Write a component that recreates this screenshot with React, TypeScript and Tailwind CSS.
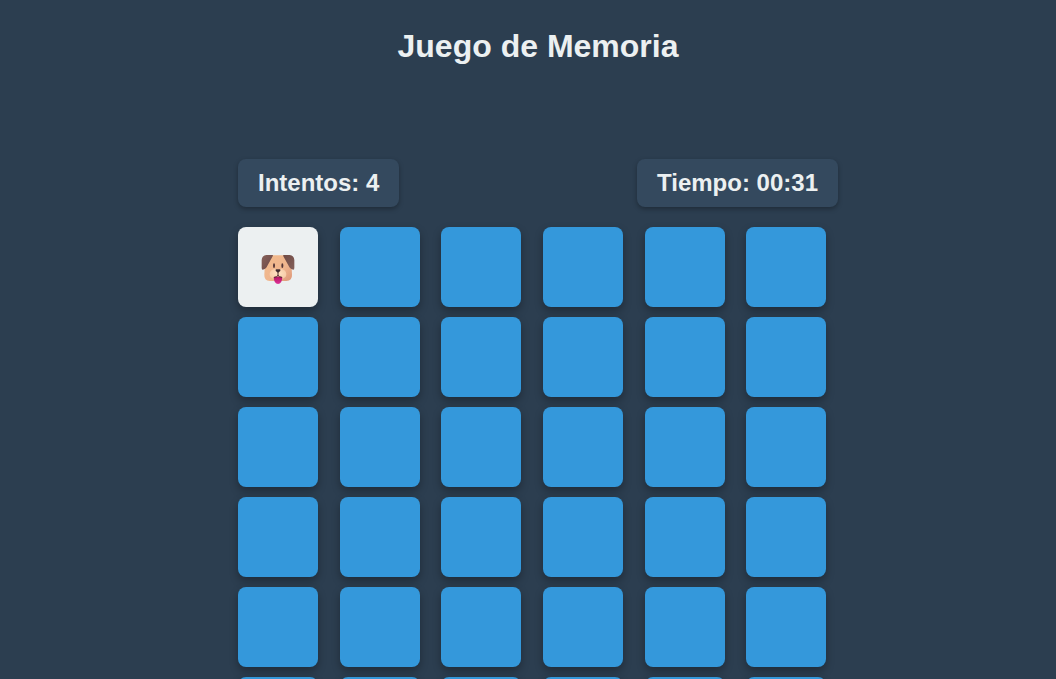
import { useState } from "react";

const TOTAL_CARDS = 36;

function DogFace() {
  return (
    <svg width="50" height="44" viewBox="0 -3 150 132" role="img" aria-label="Perro">
      <defs>
        <linearGradient id="fur" x1="0" y1="0" x2="1" y2="1">
          <stop offset="0" stopColor="#f2bb8c" />
          <stop offset="0.6" stopColor="#efb58e" />
          <stop offset="1" stopColor="#dc9678" />
        </linearGradient>
        <linearGradient id="earLeft" x1="0" y1="0" x2="1" y2="1">
          <stop offset="0" stopColor="#87625a" />
          <stop offset="1" stopColor="#6a4646" />
        </linearGradient>
        <linearGradient id="earRight" x1="0" y1="0" x2="1" y2="1">
          <stop offset="0" stopColor="#6f4a44" />
          <stop offset="1" stopColor="#84605a" />
        </linearGradient>
        <radialGradient id="muzzle" cx="0.5" cy="0.45" r="0.6">
          <stop offset="0" stopColor="#ffe3c4" />
          <stop offset="1" stopColor="#f6c8a4" />
        </radialGradient>
        <linearGradient id="tongue" x1="0" y1="0" x2="0" y2="1">
          <stop offset="0" stopColor="#b3125f" />
          <stop offset="1" stopColor="#e0359a" />
        </linearGradient>
      </defs>
      <path
        d="M46 28H104Q115 29 115 45L117 86Q118 104 100 105H50Q33 104 34 86L36 45Q37 29 46 28Z"
        fill="url(#fur)"
      />
      <path d="M40 27H59Q61 28 59 31L44 58Q38 71 29 71Q26 71 26 65V42Q27 28 40 27Z" fill="url(#earLeft)" />
      <path d="M110 27H92Q89 28 91 31L106 58Q112 71 121 71Q124 71 124 65V42Q123 28 110 27Z" fill="url(#earRight)" />
      <path
        d="M75 70C60 66 50 74 50 85C50 97 64 102 75 96C86 102 100 97 100 85C100 74 90 66 75 70Z"
        fill="url(#muzzle)"
      />
      <ellipse cx="63" cy="59" rx="3" ry="7" fill="#533536" />
      <ellipse cx="88" cy="59" rx="3" ry="7" fill="#533536" />
      <path d="M62 94Q75 89 88 94Q87 114 75 114Q63 114 62 94Z" fill="url(#tongue)" />
      <path d="M75 79V88M64 94Q71 94 75 88Q79 94 86 94" fill="none" stroke="#50302f" strokeWidth="3" strokeLinecap="round" />
      <path d="M69 70H81Q84 72 81 76Q78 79 75 80Q72 79 69 76Q66 72 69 70Z" fill="#402a2d" />
    </svg>
  );
}

function Stat({ label, value }: { label: string; value: string }) {
  return (
    <div className="rounded-lg bg-[#34495e] px-5 py-2.5 text-2xl leading-7 font-bold shadow-[0_2px_5px_rgba(0,0,0,0.3)]">
      {label}: {value}
    </div>
  );
}

export default function App() {
  const [selected, setSelected] = useState(0);

  return (
    <main className="min-h-screen bg-[#2c3e50] pt-7 pb-5 pl-5 font-['Liberation_Sans',Arial,sans-serif] text-[#ecf0f1]">
      <h1 className="text-center text-[32px] leading-9 font-bold">Juego de Memoria</h1>
      <section className="mx-auto mt-[95px] max-w-[600px]">
        <div className="mb-5 flex justify-between">
          <Stat label="Intentos" value="4" />
          <Stat label="Tiempo" value="00:31" />
        </div>
        <div className="grid grid-cols-6 gap-2.5">
          {Array.from({ length: TOTAL_CARDS }, (_, index) => (
            <button
              key={index}
              type="button"
              aria-label={`Carta ${index + 1}`}
              onClick={() => setSelected(index)}
              className={`flex size-20 cursor-pointer items-center justify-center rounded-lg shadow-[0_4px_8px_rgba(0,0,0,0.3)] ${
                index === selected ? "bg-[#ecf0f1]" : "bg-[#3498db]"
              }`}
            >
              {index === selected && <DogFace />}
            </button>
          ))}
        </div>
      </section>
    </main>
  );
}
